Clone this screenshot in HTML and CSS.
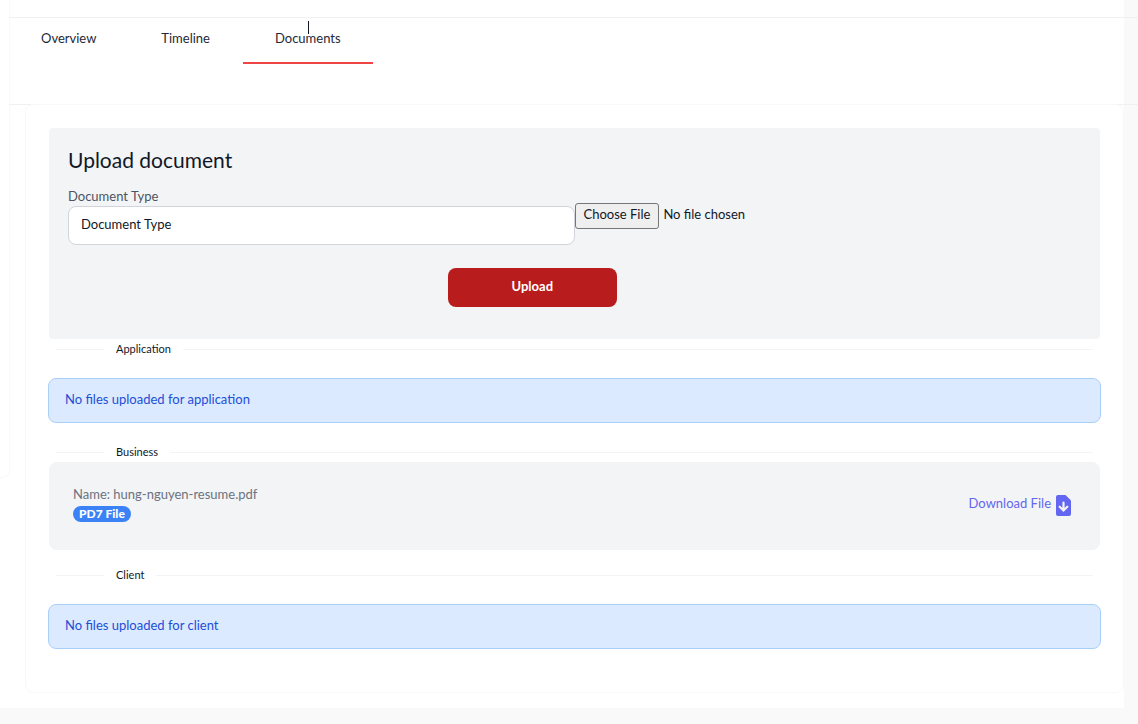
FILE: index.html
```html
<!DOCTYPE html>
<html lang="en">
<head>
    <meta charset="UTF-8">
    <meta name="viewport" content="width=device-width, initial-scale=1.0">
    <title>Documents</title>
    <link rel="stylesheet" href="styles.css">
</head>
<body>
    <div class="page">
        <aside class="sidebar"></aside>
        <main class="main">
            <nav class="tabs">
                <a class="tab" href="#overview">Overview</a>
                <a class="tab" href="#timeline">Timeline</a>
                <a class="tab active" href="#documents">Documents<span class="cursor"></span></a>
            </nav>

            <section class="card">
                <form class="upload">
                    <h2>Upload document</h2>
                    <div class="fields">
                        <div class="field">
                            <label for="docType">Document Type</label>
                            <select id="docType">
                                <option>Document Type</option>
                            </select>
                        </div>
                        <input type="file" class="file" id="docFile" aria-label="File">
                    </div>
                    <button type="button" class="upload-btn">Upload</button>
                </form>

                <h3 class="divider">Application</h3>
                <p class="alert">No files uploaded for application</p>

                <h3 class="divider">Business</h3>
                <div class="document">
                    <div>
                        <div class="doc-name">Name: hung-nguyen-resume.pdf</div>
                        <span class="badge">PD7 File</span>
                    </div>
                    <a class="download" href="#download">Download File
                        <svg width="15" height="21" viewBox="0 0 15 21">
                            <path fill="#6366f1" d="M2 0H9.500L15 5.500V19a2 2 0 0 1-2 2H2a2 2 0 0 1-2-2V2a2 2 0 0 1 2-2z"/>
                            <path fill="none" stroke="#f3f4f6" stroke-width="2.200" stroke-linecap="round" d="M7.500 7.500V15M3.700 11.700L7.500 15.500L11.300 11.700"/>
                        </svg>
                    </a>
                </div>

                <h3 class="divider">Client</h3>
                <p class="alert">No files uploaded for client</p>
            </section>
        </main>
    </div>
</body>
</html>
```

FILE: styles.css
```css
* { box-sizing: border-box; }
body { margin: 0; background: #f9f9f9; color: #111827; font-family: Lato, "Liberation Sans", sans-serif; font-size: 13px; line-height: 20px; }
h2, h3, p { margin: 0; font-weight: 400; }

.page { display: flex; align-items: flex-start; margin-right: 14px; padding-bottom: 15px; background: #fff; }
.sidebar { flex: none; width: 10px; height: 478px; border: 1px solid #f9f9f9; border-width: 0 1px 1px 0; border-radius: 0 0 8px 0; }
.main { flex: 1; margin-left: -1px; padding-top: 17px; }

.tabs { display: flex; align-items: flex-start; gap: 1px; height: 88px; margin-right: -14px; border: 1px solid #f0f0f0; border-width: 1px 0; }
.tab { position: relative; padding: 10px 32px 14px; border-bottom: 2px solid transparent; color: #1f2937; text-decoration: none; }
.tab.active { border-color: #ef4444; }
.cursor { position: absolute; top: 3px; left: 50%; width: 1px; height: 13px; background: #111827; }

.card { position: relative; margin: -1px 0 0 16px; padding: 23px 22px 24px; background: #fff; border: 1px solid #f8f8f8; border-radius: 8px; }

.upload { margin: 0 1px; padding: 18px 19px 32px; background: #f3f4f6; border-radius: 4px; }
.upload h2 { font-size: 21px; line-height: 28px; }
.fields { display: grid; grid-template-columns: 1fr 1fr; align-items: start; margin-top: 13px; }
.field { display: flex; flex-direction: column; }
.field label { line-height: 19px; color: #4b5563; }
.field select { appearance: none; height: 39px; padding: 0 12px 4px; border: 1px solid #d1d5db; border-radius: 8px; background: #fff; color: #111827; font: inherit; }
.file { min-width: 0; margin-top: 16px; font: inherit; color: #111827; }
.file::file-selector-button { height: 26px; padding: 0 8px 4px; border: 1px solid #767676; border-radius: 3px; background: #efefef; color: #111827; font: inherit; }
.upload-btn { display: block; width: calc(100% / 6); height: 39px; margin: 23px 0 0 37.5%; padding: 0 0 4px; border: 0; border-radius: 8px; background: #b91c1c; color: #fff; font: inherit; font-weight: 700; }

.divider { display: flex; align-items: center; gap: 12px; padding: 0 8px; font-size: 11px; }
.divider::before, .divider::after { content: ""; width: 48px; height: 1px; background: #f3f4f6; }
.divider::after { flex: 1; }
.alert { margin: 19px 0; padding: 10px 16px 13px; background: #dbeafe; border: 1px solid #a9d0fb; border-radius: 8px; color: #1d4ed8; }

.document { display: flex; justify-content: space-between; align-items: flex-start; margin: 0 1px 15px; padding: 22px 29px 28px 24px; background: #f3f4f6; border-radius: 8px; }
.doc-name { color: #6b7280; }
.badge { display: block; width: fit-content; margin-top: 2px; padding: 0 6px; border-radius: 8px; background: #3b82f6; color: #fff; font-size: 12px; font-weight: 900; line-height: 16px; }
.download { display: flex; align-items: flex-start; gap: 5px; margin-top: 11px; color: #6366f1; line-height: 17px; text-decoration: none; }
```
